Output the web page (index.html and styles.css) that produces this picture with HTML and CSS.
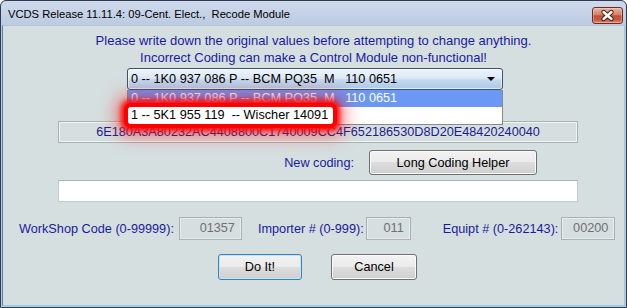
FILE: index.html
```html
<!DOCTYPE html>
<html>
<head>
<meta charset="utf-8">
<title>VCDS Recode Module</title>
<link rel="stylesheet" href="styles.css">
</head>
<body>
<div class="window">
  <div class="titlebar">
    <span class="title">VCDS Release 11.11.4: 09-Cent. Elect.,  Recode Module</span>
    <div class="close">
      <svg width="31" height="17" viewBox="0 0 31 17">
        <path d="M11.5 5 L19.5 12 M19.5 5 L11.5 12" stroke="#4a1d14" stroke-width="4.4" stroke-linecap="round" fill="none"/>
        <path d="M11.5 5 L19.5 12 M19.5 5 L11.5 12" stroke="#ffffff" stroke-width="2.4" stroke-linecap="round" fill="none"/>
      </svg>
    </div>
  </div>
  <div class="client">
    <div class="notice">Please write down the original values before attempting to change anything.<br>Incorrect Coding can make a Control Module non-functional!</div>
    <div class="combo">
      <span class="combo-text">0 -- 1K0 937 086 P -- BCM PQ35  M   110 0651</span>
      <span class="arrow"></span>
      <div class="dropdown">
        <div class="item selected">0 -- 1K0 937 086 P -- BCM PQ35  M   110 0651</div>
        <div class="item"> </div>
        <div class="hl">1 -- 5K1 955 119  -- Wischer 14091</div>
      </div>
    </div>
    <div class="codefield">6E180A3A80232AC4408800C1740009CC4F652186530D8D20E48420240040</div>
    <div class="newrow">
      <span class="label">New coding:</span>
      <button class="btn helper">Long Coding Helper</button>
    </div>
    <div class="newinput"></div>
    <div class="params">
      <span class="label">WorkShop Code (0-99999):</span>
      <span class="field f1">01357</span>
      <span class="label l2">Importer # (0-999):</span>
      <span class="field f2">011</span>
      <span class="label l3">Equipt # (0-262143):</span>
      <span class="field f3">00200</span>
    </div>
    <div class="actions">
      <button class="btn doit">Do It!</button>
      <button class="btn cancel">Cancel</button>
    </div>
  </div>
</div>
</body>
</html>
```
FILE: styles.css
```css
html, body {
  margin: 0;
  padding: 0;
  background: #ffffff;
}

.window {
  width: 627px;
  height: 308px;
  box-sizing: border-box;
  border: 1px solid #2f3b50;
  border-radius: 6px 6px 0 0;
  background: linear-gradient(#cfdaec, #bccbe2 24px, #b9c9e0);
  padding: 0 1px 1px 1px;
  display: flex;
  flex-direction: column;
  font-family: "Liberation Sans", Arial, sans-serif;
  overflow: hidden;
}

.titlebar {
  height: 24px;
  display: flex;
  align-items: center;
  justify-content: space-between;
  padding: 0 2px 0 6px;
  flex: none;
}

.title {
  font-size: 11.2px;
  color: #000000;
  white-space: pre;
  margin-top: 1px;
}

.close {
  width: 31px;
  height: 17px;
  box-sizing: border-box;
  border: 1px solid #6b2e22;
  border-radius: 3px;
  background: linear-gradient(#e9b6a6, #d68068 45%, #c24f34 52%, #c55a40 78%, #dc8e74);
  box-shadow: inset 0 0 0 1px rgba(255, 235, 225, 0.35);
  margin-top: 4px;
  position: relative;
}

.close svg {
  position: absolute;
  left: -1px;
  top: -1px;
}

.client {
  flex: 1;
  background: #d5dfe0;
  border: 1px solid;
  border-color: #b4c3da #8ecbe6 #8ecbe6 #5d7bb6;
  display: flex;
  flex-direction: column;
  font-size: 12.7px;
  color: #1a1a9e;
}

.notice {
  padding-top: 6px;
  line-height: 17px;
  font-size: 13px;
  text-align: center;
  color: #1a1aa0;
}

.combo {
  position: relative;
  margin: 2px 0 0 124px;
  width: 376px;
  height: 22px;
  box-sizing: border-box;
  border: 1px solid #3d526c;
  border-radius: 3px;
  background: linear-gradient(#eef4fb, #dde9f6 45%, #c3d9ef 55%, #acc9e6);
  box-shadow: inset 0 0 0 1px rgba(255, 255, 255, 0.55);
  display: flex;
  align-items: center;
  padding-left: 3px;
  color: #000000;
}

.combo-text {
  white-space: pre;
  flex: 1;
}

.arrow {
  width: 0;
  height: 0;
  border-left: 4px solid transparent;
  border-right: 4px solid transparent;
  border-top: 4px solid #000000;
  margin-right: 7px;
}

.dropdown {
  position: absolute;
  left: -1px;
  top: 21px;
  width: 376px;
  box-sizing: border-box;
  border: 1px solid #8a8a8a;
  border-top: none;
  background: #ffffff;
  z-index: 10;
}

.item {
  height: 17px;
  line-height: 17px;
  padding-left: 3px;
  white-space: pre;
  color: #000000;
}

.item.selected {
  background: #6b97f6;
  color: #ffffff;
}

.hl {
  position: absolute;
  left: 0;
  top: 17px;
  width: 205px;
  height: 17px;
  line-height: 17px;
  padding-left: 3px;
  box-sizing: border-box;
  background: #ffffff;
  color: #000000;
  white-space: pre;
  border-radius: 3px;
  box-shadow: 0 0 0 4px #ff0000, 0 0 5px 7px #ff1010, 0 0 18px 11px rgba(255, 0, 0, 0.5);
}

.codefield {
  margin: 31px 0 0 55px;
  width: 520px;
  height: 22px;
  box-sizing: border-box;
  border: 1px solid #aab3b3;
  box-shadow: inset 0 0 0 1px #eef3f3;
  text-align: center;
  line-height: 20px;
  color: #1c1c8c;
}

.newrow {
  margin-top: 7px;
  display: flex;
  justify-content: flex-end;
  align-items: center;
  padding-right: 87px;
}

.label {
  white-space: pre;
}

.btn {
  font-family: "Liberation Sans", Arial, sans-serif;
  font-size: 12.7px;
  color: #000000;
  border: 1px solid #707070;
  border-radius: 3px;
  background: linear-gradient(#f2f2f2, #ebebeb 50%, #dddddd 50%, #cfcfcf);
  box-shadow: inset 0 0 0 1px #fbfbfb;
  padding: 0;
  margin: 0;
}

.helper {
  margin-left: 15px;
  width: 168px;
  height: 25px;
}

.newinput {
  margin: 5px 0 0 55px;
  width: 520px;
  height: 22px;
  box-sizing: border-box;
  background: #ffffff;
  border: 1px solid #c3cbcb;
  border-top-color: #a9b1b1;
}

.params {
  margin-top: 15px;
  display: flex;
  align-items: center;
  padding-left: 16px;
}

.field {
  height: 23px;
  box-sizing: border-box;
  border: 1px solid #a9b1b1;
  box-shadow: inset 0 0 0 1px #e6ecec;
  text-align: right;
  line-height: 21px;
  padding-right: 6px;
  color: #707070;
}

.f1 { width: 63px; margin-left: 5px; }
.l2 { margin-left: 16px; }
.f2 { width: 45px; margin-left: 2px; }
.l3 { margin-left: 32px; }
.f3 { width: 54px; margin-left: 3px; }

.actions {
  margin-top: 14px;
  display: flex;
  padding-left: 215px;
}

.doit {
  width: 84px;
  height: 26px;
  border-color: #3c7fb1;
  box-shadow: inset 0 0 0 1px #bfe6fa;
}

.cancel {
  width: 86px;
  height: 26px;
  margin-left: 29px;
}
```
